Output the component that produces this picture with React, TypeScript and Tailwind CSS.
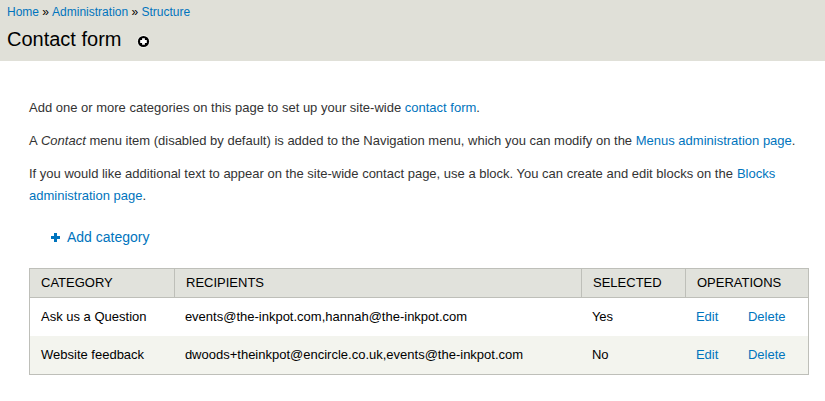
import React from "react";

const rows = [
  { category: "Ask us a Question", recipients: "events@the-inkpot.com,hannah@the-inkpot.com", selected: "Yes" },
  { category: "Website feedback", recipients: "dwoods+theinkpot@encircle.co.uk,events@the-inkpot.com", selected: "No" },
];

function Link({ children }: { children: React.ReactNode }) {
  return <a href="#" className="text-[#0074bd]">{children}</a>;
}

export default function App() {
  return (
    <div className="min-h-screen bg-white text-black font-['Liberation_Sans',Arial,sans-serif] text-[13.008px]">
      <header className="h-[61px] bg-[#e0e0d8] px-[7px] pt-1">
        <nav className="text-[12.01px] leading-4">
          <Link>Home</Link> <span className="mr-[0.4px]">»</span> <Link>Administration</Link> » <Link>Structure</Link>
        </nav>
        <div className="mt-[7px] flex items-center">
          <h1 className="w-[115px] text-[20px] leading-6 whitespace-nowrap">Contact form</h1>
          <svg className="ml-[15px] mt-[5px]" width="13" height="13" viewBox="0 0 13 13">
            <circle cx="6.5" cy="6.5" r="6.4" fill="#f4f4f0" />
            <circle cx="6.5" cy="6.5" r="5.6" fill="#000" />
            <path d="M6.5 3.2v6.6M3.2 6.5h6.6" stroke="#fff" strokeWidth="2.8" />
          </svg>
        </div>
      </header>
      <main className="pl-[29px] pr-4 pt-9">
        <div className="flex flex-col gap-[11px] leading-[22px] text-[#333]">
          <p>Add one or more categories on this page to set up your site-wide <Link>contact form</Link>.</p>
          <p className="whitespace-nowrap">A <em className="ml-[0.4px]">Contact</em> menu item (disabled by default) is added to the Navigation menu, which you can modify on the <Link>Menus administration page</Link>.</p>
          <p>If you would like additional text to appear on the site-wide contact page, use a block. You can create and edit blocks on the <span className="ml-[0.4px]"><Link>Blocks<br />administration page</Link></span>.</p>
        </div>
        <div className="mt-5 ml-[22px] flex h-5 items-center text-[14px] leading-5">
          <svg className="mr-[7px] mt-px" width="9" height="9" viewBox="0 0 9 9" shapeRendering="crispEdges">
            <path d="M4.5 0v9M0 4.5h9" stroke="#0074bd" strokeWidth="3" />
          </svg>
          <Link>Add category</Link>
        </div>
        <table className="mt-[21px] w-[779px] table-fixed border-collapse border border-[#bebfb9] text-left leading-5">
          <colgroup>
            <col className="w-[145px]" /><col className="w-[407px]" /><col className="w-[104px]" /><col className="w-[123px]" />
          </colgroup>
          <thead>
            <tr className="h-[29px] bg-[#e1e2dc]">
              {["Category", "Recipients", "Selected", "Operations"].map((h) => (
                <th key={h} className="border border-[#bebfb9] py-0 pl-[11px] font-normal uppercase">{h}</th>
              ))}
            </tr>
          </thead>
          <tbody>
            {rows.map((r) => (
              <tr key={r.category} className="h-[38px] even:h-[39px] even:bg-[#f3f4ee]">
                <td className="pl-[11px]">{r.category}</td>
                <td className="pl-[10.4px]">{r.recipients}</td>
                <td className="pl-[10.4px]">{r.selected}</td>
                <td className="pl-[10.4px]"><div className="flex gap-[29.6px]"><Link>Edit</Link><Link>Delete</Link></div></td>
              </tr>
            ))}
          </tbody>
        </table>
      </main>
    </div>
  );
}
